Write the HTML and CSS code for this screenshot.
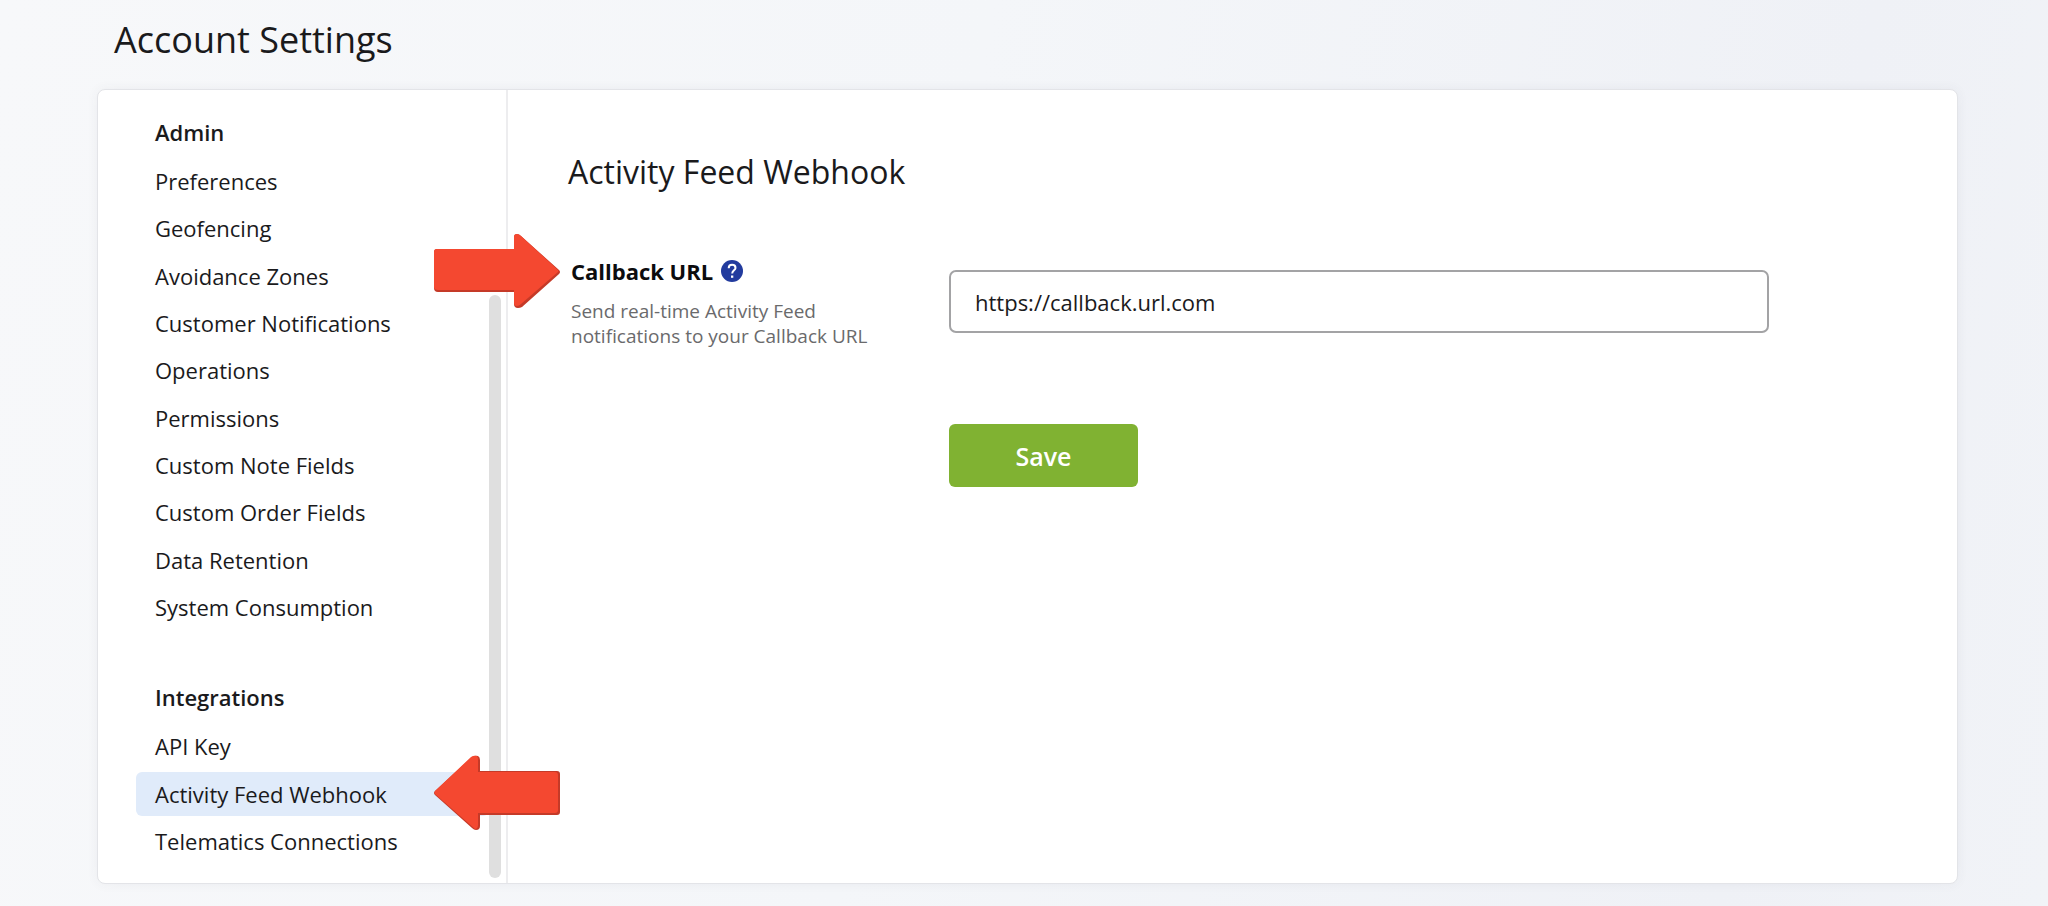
FILE: index.html
```
<!DOCTYPE html>
<html lang="en">
<head>
<meta charset="utf-8">
<meta name="viewport" content="width=device-width, initial-scale=1">
<title>Account Settings</title>
<link rel="stylesheet" href="styles.css">
</head>
<body>
<div class="page">
  <h1 class="page-title">Account Settings</h1>
  <div class="panel">
    <aside class="sidebar">
      <nav class="nav" aria-label="Account settings">
        <section class="nav-group nav-group-long">
          <h2 class="nav-heading">Admin</h2>
          <ul class="nav-list">
            <li><a class="nav-link" href="#">Preferences</a></li>
            <li><a class="nav-link" href="#">Geofencing</a></li>
            <li><a class="nav-link" href="#">Avoidance Zones</a></li>
            <li><a class="nav-link" href="#">Customer Notifications</a></li>
            <li><a class="nav-link" href="#">Operations</a></li>
            <li><a class="nav-link" href="#">Permissions</a></li>
            <li><a class="nav-link" href="#">Custom Note Fields</a></li>
            <li><a class="nav-link" href="#">Custom Order Fields</a></li>
            <li><a class="nav-link" href="#">Data Retention</a></li>
            <li><a class="nav-link" href="#">System Consumption</a></li>
          </ul>
        </section>
        <section class="nav-group">
          <h2 class="nav-heading">Integrations</h2>
          <ul class="nav-list">
            <li><a class="nav-link" href="#">API Key</a></li>
            <li class="nav-item-current">
              <a class="nav-link nav-link-current" href="#" aria-current="page">Activity Feed Webhook</a>
              <svg class="arrow arrow-nav" viewBox="0 0 126 76" aria-hidden="true">
                <path fill="#c53a28" d="M1 36 L38 2 Q41 0 44 1 Q46 2 46 5 V16 H123 Q126 16 126 19 V57 Q126 60 123 60 H46 V71 Q46 75 42 75 Q40 75 38 73 L1 40 Q-1 38 1 36Z"/>
                <path fill="#f44830" d="M1 36 L37 2 Q40 0 43 1 Q44 2 44 5 V17 H121 Q124 17 124 20 V55 Q124 58 121 58 H44 V70 Q44 74 41 74 L1 39 Q0 38 1 36Z"/>
              </svg>
            </li>
            <li><a class="nav-link" href="#">Telematics Connections</a></li>
          </ul>
        </section>
      </nav>
      <div class="scroll-track"><div class="scroll-thumb"></div></div>
    </aside>
    <main class="content">
      <h2 class="content-title">Activity Feed Webhook</h2>
      <form class="form">
        <div class="field-info">
          <div class="field-heading">
            <label class="field-label" for="callback-url">Callback URL</label>
            <button class="help" type="button" aria-label="Help">
              <svg class="help-icon" viewBox="0 0 22 22" aria-hidden="true">
                <circle cx="11" cy="11" r="11" fill="#223b9e"/>
                <path d="M7.700 8.200C7.700 6.100 9.100 4.800 11.100 4.800C13.100 4.800 14.500 6.100 14.500 7.900C14.500 10.300 11.200 10.500 11.200 13.500" fill="none" stroke="#fff" stroke-width="2"/>
                <rect x="10" y="15.500" width="2.300" height="2.300" fill="#fff"/>
              </svg>
            </button>
            <svg class="arrow arrow-field" viewBox="0 0 126 76" aria-hidden="true">
              <path fill="#c53a28" d="M0 19 Q0 16 3 16 H80 V4 Q80 1 83 1 Q85 1 87 3 L125 37 Q127 39 125 41 L88 74 Q86 75 84 75 Q80 75 80 71 V59 H4 Q0 59 0 55Z"/>
              <path fill="#f44830" d="M0 19 Q0 16 3 16 H80 V4 Q80 1 83 1 Q85 1 87 3 L124 37 Q125 38 124 39 L87 71 Q85 73 83 73 Q80 73 80 70 V57 H4 Q0 57 0 54Z"/>
            </svg>
          </div>
          <p class="field-hint" id="callback-hint">Send real-time Activity Feed notifications to your Callback URL</p>
        </div>
        <div class="field-control">
          <input class="text-input" id="callback-url" type="text" value="https://callback.url.com" aria-describedby="callback-hint">
          <button class="save" type="button">Save</button>
        </div>
      </form>
    </main>
  </div>
</div>
</body>
</html>
```
FILE: styles.css
```
* {
  box-sizing: border-box;
}

body {
  margin: 0;
  min-height: 100vh;
  background: linear-gradient(100deg, #f7f8fa 0%, #f4f6f9 45%, #eff1f6 85%, #f1f3f7 100%);
  color: #1a1a1c;
  font-family: "Open Sans", "Noto Sans", sans-serif;
  font-size: 22px;
}

.page {
  display: flex;
  flex-direction: column;
  min-height: 100vh;
  padding: 14px 90px 22px 97px;
}

.page-title {
  margin: 0 0 23px 17px;
  font-size: 36px;
  font-weight: 400;
  line-height: 52px;
}

.panel {
  display: flex;
  flex: 1;
  background: #fff;
  border: 1px solid #e3e4e8;
  border-radius: 8px;
  box-shadow: 0 0 12px rgba(60, 60, 80, 0.06);
}

.sidebar {
  display: flex;
  flex: none;
  width: 410px;
  padding: 20px 5px 5px 38px;
  border-right: 2px solid #ededef;
}

.nav {
  flex: 1;
  display: flex;
  flex-direction: column;
  gap: 46px;
  padding-bottom: 15px;
}

.nav-group {
  display: flex;
  flex-direction: column;
  flex-grow: 1;
}

.nav-group-long {
  flex-grow: 3;
}

.nav-heading {
  margin: 0 0 5px;
  padding-left: 19px;
  font-size: 22px;
  font-weight: 600;
  line-height: 44px;
}

.nav-list {
  display: flex;
  flex: 1;
  flex-direction: column;
  justify-content: space-between;
  gap: 3px;
  margin: 0;
  padding: 0;
  list-style: none;
}

.nav-item-current {
  position: relative;
}

.nav-link {
  display: block;
  padding-left: 19px;
  border-radius: 6px;
  color: inherit;
  line-height: 44px;
  text-decoration: none;
}

.nav-link-current {
  background: #e0ebfa;
}

.scroll-track {
  display: flex;
  flex-direction: column;
  width: 12px;
  padding-top: 185px;
}

.scroll-thumb {
  flex: 1;
  border-radius: 6px;
  background: #dfdfdf;
}

.arrow {
  position: absolute;
  z-index: 1;
  width: 126px;
  height: 76px;
}

.arrow-nav {
  top: -17px;
  left: 298px;
}

.arrow-field {
  top: -24px;
  right: 100%;
  margin-right: 11px;
}

.content {
  flex: 1;
  min-width: 0;
  padding: 60px 188px 60px 60px;
}

.content-title {
  margin: 0 0 76px;
  font-size: 32px;
  font-weight: 400;
  line-height: 44px;
}

.form {
  display: grid;
  grid-template-columns: 318px 1fr;
  column-gap: 60px;
  padding-left: 3px;
}

.field-heading {
  position: relative;
  display: flex;
  align-items: center;
  gap: 8px;
  margin-top: -13px;
  line-height: 28px;
}

.field-label {
  font-weight: 700;
  color: #0c0c0e;
}

.help {
  display: flex;
  padding: 0;
  border: 0;
  background: none;
  cursor: pointer;
}

.help-icon {
  width: 22px;
  height: 22px;
}

.field-hint {
  margin: 14px 0 0;
  color: #6a6a6c;
  font-size: 19px;
  line-height: 25px;
}

.field-control {
  display: flex;
  flex-direction: column;
  align-items: flex-start;
  gap: 91px;
}

.text-input {
  width: 100%;
  height: 63px;
  padding: 0 24px;
  border: 2px solid #a3a3a5;
  border-radius: 7px;
  background: #fff;
  color: inherit;
  font: inherit;
}

.save {
  width: 189px;
  height: 63px;
  border: 0;
  border-radius: 6px;
  background: #80b232;
  color: #fff;
  font: inherit;
  font-size: 25px;
  font-weight: 600;
  cursor: pointer;
}
```
